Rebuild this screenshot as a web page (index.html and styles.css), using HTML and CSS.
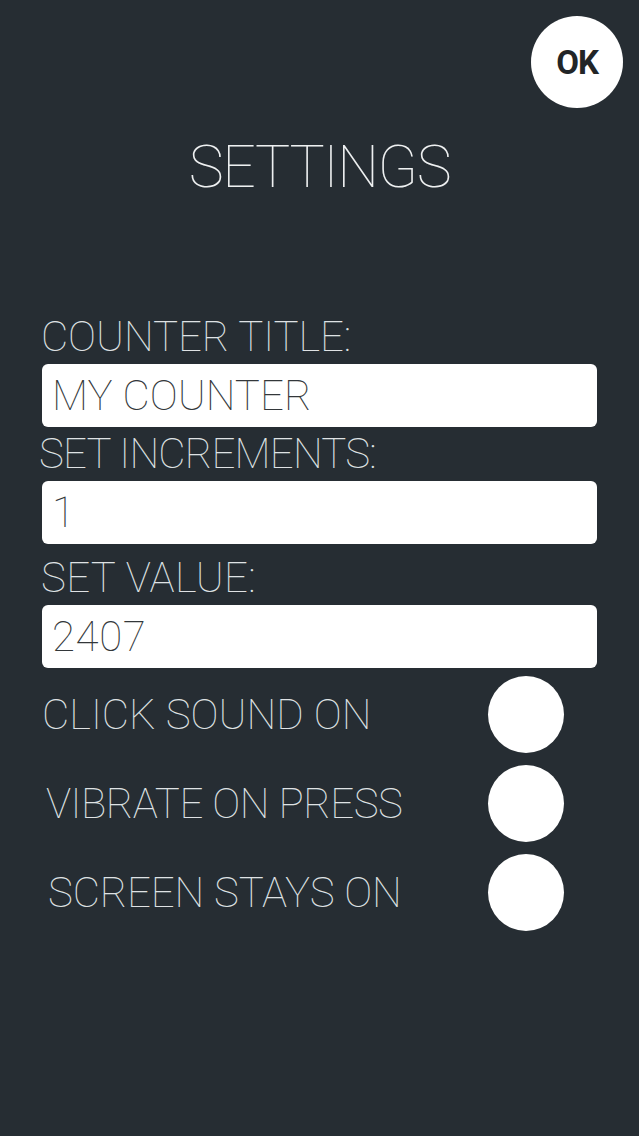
FILE: index.html
```html
<!DOCTYPE html>
<html>
<head>
<meta charset="utf-8">
<link rel="stylesheet" href="styles.css">
</head>
<body>
<div class="page">
  <div class="topbar">
    <div class="ok-btn">OK</div>
  </div>
  <h1 class="title">SETTINGS</h1>
  <div class="form">
    <div class="label l1">COUNTER TITLE:</div>
    <div class="field">MY COUNTER</div>
    <div class="label l2">SET INCREMENTS:</div>
    <div class="field">1</div>
    <div class="label l3">SET VALUE:</div>
    <div class="field f3">2407</div>
    <div class="toggles">
      <div class="toggle-row t1"><span class="toggle-label">CLICK SOUND ON</span><span class="knob"></span></div>
      <div class="toggle-row t2"><span class="toggle-label">VIBRATE ON PRESS</span><span class="knob"></span></div>
      <div class="toggle-row t3"><span class="toggle-label">SCREEN STAYS ON</span><span class="knob"></span></div>
    </div>
  </div>
</div>
</body>
</html>
```

FILE: styles.css
```css
html, body {
  margin: 0;
  padding: 0;
  background: #262d33;
}
body {
  font-family: Roboto, "Liberation Sans", sans-serif;
  width: 639px;
  height: 1136px;
  overflow: hidden;
  -webkit-font-smoothing: antialiased;
}
.page {
  display: flex;
  flex-direction: column;
}
.topbar {
  display: flex;
  justify-content: flex-end;
  padding: 16px 16px 0 0;
}
.ok-btn {
  width: 92px;
  height: 92px;
  border-radius: 50%;
  background: #ffffff;
  color: #222527;
  font-weight: 700;
  font-size: 33px;
  letter-spacing: -1px;
  display: flex;
  align-items: center;
  justify-content: center;
}
.title {
  margin: 29px 0 0 0;
  text-align: center;
  font-weight: 100;
  font-size: 59px;
  line-height: 59px;
  color: #eef0f1;
  letter-spacing: -1.4px;
}
.form {
  display: flex;
  flex-direction: column;
  padding: 0 42px;
  margin-top: 120px;
}
.label {
  font-weight: 100;
  font-size: 42px;
  line-height: 42px;
  color: #dfe2e4;
  white-space: nowrap;
  letter-spacing: -0.5px;
}
.l1 { margin-left: -1px; letter-spacing: -0.1px; }
.l2 { margin-left: -3px; margin-top: 6px; letter-spacing: -0.8px; }
.l3 { margin-left: -1px; margin-top: 13px; letter-spacing: 0.3px; }
.field {
  height: 63px;
  margin-top: 6px;
  background: #ffffff;
  border-radius: 6px;
  display: flex;
  align-items: center;
  padding-left: 10px;
  font-weight: 100;
  font-size: 42px;
  color: #33373a;
  letter-spacing: 0;
}
.f3 { letter-spacing: 0.6px; }
.toggles {
  display: flex;
  flex-direction: column;
  gap: 12px;
  margin-top: 8px;
}
.toggle-row {
  height: 77px;
  display: flex;
  align-items: center;
  justify-content: space-between;
  padding-right: 33px;
}
.toggle-label {
  font-weight: 100;
  font-size: 42px;
  line-height: 42px;
  color: #dfe2e4;
  white-space: nowrap;
  letter-spacing: 0;
}
.t2 .toggle-label { margin-left: 4px; letter-spacing: -0.5px; }
.t3 .toggle-label { margin-left: 6px; letter-spacing: -0.15px; }
.knob {
  width: 76px;
  height: 77px;
  border-radius: 50%;
  background: #ffffff;
}
```
